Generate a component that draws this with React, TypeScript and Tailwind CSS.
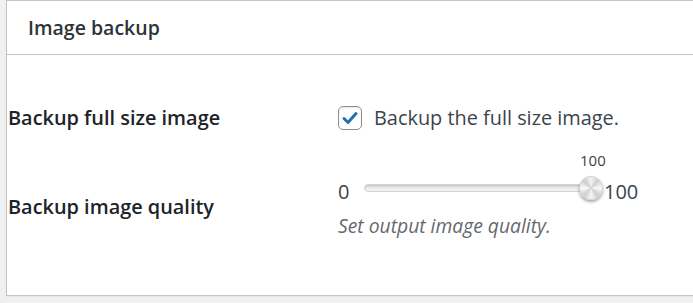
const font = { fontFamily: '"Open Sans", "Noto Sans", sans-serif' };

export default function App() {
  return (
    <div className="min-h-[303px] w-[693px] overflow-hidden bg-[#f0f0f1] pl-[6px]" style={font}>
      <section className="w-[700px] border border-[#c3c4c7] bg-white shadow-[0_1px_1px_rgba(0,0,0,0.04)]">
        <header className="flex h-[54px] items-center border-b border-[#c3c4c7] px-[21px]">
          <h2 className="text-[19.5px] font-semibold text-[#2c3338]">Image backup</h2>
        </header>
        <div className="h-[240px] pt-[43px]">
          <div className="flex h-[40px] items-center">
            <div className="w-[331px] pl-[1px] text-[19.9px] font-semibold text-[#1d2327]">Backup full size image</div>
            <label className="flex items-center gap-[12px] text-[19.9px] text-[#3c434a]">
              <span className="flex h-[24px] w-[24px] items-center justify-center rounded-[5px] border border-[#8c8f94] bg-white shadow-[inset_0_1px_2px_rgba(0,0,0,0.1)]">
                <svg viewBox="0 0 20 20" className="h-[20px] w-[20px]">
                  <path d="M4 10.5l4 4 8-9" fill="none" stroke="#2271b1" strokeWidth="3" strokeLinecap="round" strokeLinejoin="round" />
                </svg>
              </span>
              Backup the full size image.
            </label>
          </div>
          <div className="mt-[8px] flex">
            <div className="w-[331px] pl-[1px] pt-[46px] text-[19.9px] font-semibold text-[#1d2327]">Backup image quality</div>
            <div>
              <div className="flex h-[20px] w-[300px] items-center pl-[242px] pt-[8px] text-[15px] text-[#3c434a]">100</div>
              <div className="mt-[6px] flex h-[32px] items-center text-[20px] text-[#3c434a]">
                <span className="w-[26px] pt-[8px]">0</span>
                <div className="relative h-[8px] w-[232px] rounded-full border border-[#d4d4d4] bg-gradient-to-b from-[#dcdcdc] to-[#f7f7f7] shadow-[inset_0_1px_2px_rgba(0,0,0,0.12)]">
                  <span className="absolute -right-[8px] top-1/2 h-[24px] w-[24px] -translate-y-1/2 rounded-full border border-[#d0d0d0] bg-[conic-gradient(from_0deg,#f4f4f4,#cfcfcf_12%,#fafafa_25%,#cdcdcd_38%,#f6f6f6_50%,#cfcfcf_62%,#fbfbfb_75%,#cdcdcd_88%,#f4f4f4)] shadow-[0_2px_3px_rgba(0,0,0,0.35)]" />
                </div>
                <span className="pl-[8px] pt-[8px]">100</span>
              </div>
              <div className="mt-[8px] text-[19.3px] italic text-[#646970]">Set output image quality.</div>
            </div>
          </div>
        </div>
      </section>
    </div>
  );
}
